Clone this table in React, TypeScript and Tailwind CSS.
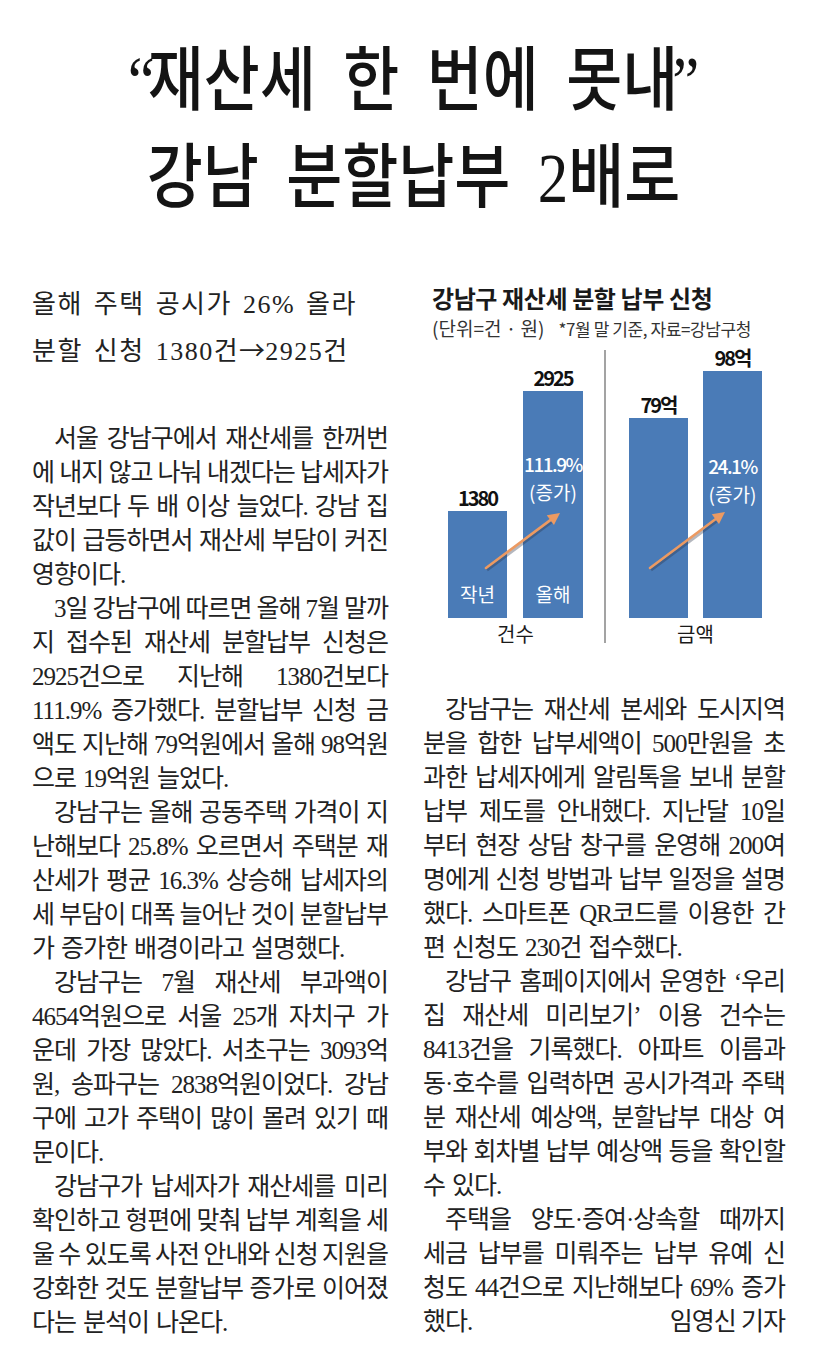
import React from 'react';

type Line = { t: string; ind?: boolean; last?: boolean; by?: string };

const leftCol: Line[] = [
  { t: '서울 강남구에서 재산세를 한꺼번', ind: true },
  { t: '에 내지 않고 나눠 내겠다는 납세자가' },
  { t: '작년보다 두 배 이상 늘었다. 강남 집' },
  { t: '값이 급등하면서 재산세 부담이 커진' },
  { t: '영향이다.', last: true },
  { t: '3일 강남구에 따르면 올해 7월 말까', ind: true },
  { t: '지 접수된 재산세 분할납부 신청은' },
  { t: '2925건으로 지난해 1380건보다' },
  { t: '111.9% 증가했다. 분할납부 신청 금' },
  { t: '액도 지난해 79억원에서 올해 98억원' },
  { t: '으로 19억원 늘었다.', last: true },
  { t: '강남구는 올해 공동주택 가격이 지', ind: true },
  { t: '난해보다 25.8% 오르면서 주택분 재' },
  { t: '산세가 평균 16.3% 상승해 납세자의' },
  { t: '세 부담이 대폭 늘어난 것이 분할납부' },
  { t: '가 증가한 배경이라고 설명했다.', last: true },
  { t: '강남구는 7월 재산세 부과액이', ind: true },
  { t: '4654억원으로 서울 25개 자치구 가' },
  { t: '운데 가장 많았다. 서초구는 3093억' },
  { t: '원, 송파구는 2838억원이었다. 강남' },
  { t: '구에 고가 주택이 많이 몰려 있기 때' },
  { t: '문이다.', last: true },
  { t: '강남구가 납세자가 재산세를 미리', ind: true },
  { t: '확인하고 형편에 맞춰 납부 계획을 세' },
  { t: '울 수 있도록 사전 안내와 신청 지원을' },
  { t: '강화한 것도 분할납부 증가로 이어졌' },
  { t: '다는 분석이 나온다.', last: true },
];

const rightCol: Line[] = [
  { t: '강남구는 재산세 본세와 도시지역', ind: true },
  { t: '분을 합한 납부세액이 500만원을 초' },
  { t: '과한 납세자에게 알림톡을 보내 분할' },
  { t: '납부 제도를 안내했다. 지난달 10일' },
  { t: '부터 현장 상담 창구를 운영해 200여' },
  { t: '명에게 신청 방법과 납부 일정을 설명' },
  { t: '했다. 스마트폰 QR코드를 이용한 간' },
  { t: '편 신청도 230건 접수했다.', last: true },
  { t: '강남구 홈페이지에서 운영한 ‘우리', ind: true },
  { t: '집 재산세 미리보기’ 이용 건수는' },
  { t: '8413건을 기록했다. 아파트 이름과' },
  { t: '동·호수를 입력하면 공시가격과 주택' },
  { t: '분 재산세 예상액, 분할납부 대상 여' },
  { t: '부와 회차별 납부 예상액 등을 확인할' },
  { t: '수 있다.', last: true },
  { t: '주택을 양도·증여·상속할 때까지', ind: true },
  { t: '세금 납부를 미뤄주는 납부 유예 신' },
  { t: '청도 44건으로 지난해보다 69% 증가' },
  { t: '했다.', by: '임영신 기자' },
];

// one printed line of the column, spread edge to edge like a newspaper
const TextLine = ({ line }: { line: Line }) => {
  if (line.by) {
    return (
      <div className="flex h-[34px] justify-between whitespace-nowrap leading-[34px]">
        <span>{line.t}</span>
        <span>{line.by}</span>
      </div>
    );
  }
  return (
    <div
      className={`flex h-[34px] whitespace-nowrap leading-[34px] ${
        line.last ? 'gap-x-[7px]' : 'justify-between gap-x-[4px]'
      } ${line.ind ? 'pl-[22px]' : ''}`}
    >
      {line.t.split(' ').map((w, i) => (
        <span key={i}>{w}</span>
      ))}
    </div>
  );
};

const Arrow = ({ x1, y1, x2, y2 }: { x1: number; y1: number; x2: number; y2: number }) => {
  const len = Math.hypot(x2 - x1, y2 - y1);
  const ux = (x2 - x1) / len;
  const uy = (y2 - y1) / len;
  const bx = x2 - ux * 12;
  const by = y2 - uy * 12;
  const nx = -uy;
  const ny = ux;
  const head = `${x2},${y2} ${bx + nx * 6},${by + ny * 6} ${bx - nx * 6},${by - ny * 6}`;
  return (
    <g>
      <line x1={x1 + 1} y1={y1 + 2} x2={bx + 1} y2={by + 2} stroke="rgba(40,50,70,0.35)" strokeWidth={3} />
      <line x1={x1} y1={y1} x2={bx} y2={by} stroke="#ec9a62" strokeWidth={2.6} strokeLinecap="round" />
      <polygon points={head} fill="#ec9a62" />
    </g>
  );
};

const Bar = ({
  value,
  width,
  height,
  pct,
  pctTop,
  label,
}: {
  value: string;
  width: number;
  height: number;
  pct?: string;
  pctTop?: number;
  label?: string;
}) => (
  <div className="flex flex-col items-center">
    <div className="mb-[3px] text-[20px] font-bold leading-[20px] tracking-[-2px] text-[#111]">{value}</div>
    <div className="flex flex-col items-center bg-[#4a7bb7] text-white" style={{ width, height }}>
      {pct && (
        <div className="text-center text-[19px] leading-[28px]" style={{ paddingTop: pctTop }}>
          <span className="font-medium tracking-[-1.5px]">{pct}</span>
          <br />
          (증가)
        </div>
      )}
      {label && <div className="mt-auto pb-[13px] text-[19px] leading-[22px]">{label}</div>}
    </div>
  </div>
);

const Chart = () => (
  <div className="font-['Noto_Sans_CJK_KR',sans-serif] text-[#1a1a1a]">
    <div className="pl-[9px] text-[24px] font-bold leading-[28px] tracking-[-0.4px]">강남구 재산세 분할 납부 신청</div>
    <div className="mt-[4px] flex items-baseline pl-[9px] leading-[24px] text-[#333]">
      <span className="text-[19px]">(단위=건 · 원)</span>
      <span className="ml-[14px] text-[17px] tracking-[-0.4px]">*7월 말 기준, 자료=강남구청</span>
    </div>
    <div className="relative mt-[4px] flex h-[305px]">
      <div className="ml-[25px] flex flex-col">
        <div className="flex flex-1 items-end gap-[16px]">
          <Bar value="1380" width={59} height={107} label="작년" />
          <Bar value="2925" width={60} height={227} pct="111.9%" pctTop={59} label="올해" />
        </div>
        <div className="h-[32px] pt-[4px] text-center text-[20px] leading-[24px]">건수</div>
      </div>
      <div className="mb-[7px] ml-[21px] mt-[5px] w-[2px] bg-[#a3a3a3]" />
      <div className="ml-[23px] flex flex-col">
        <div className="flex flex-1 items-end gap-[15px]">
          <Bar value="79억" width={59} height={200} />
          <Bar value="98억" width={59} height={247} pct="24.1%" pctTop={81} />
        </div>
        <div className="h-[32px] pt-[4px] text-center text-[20px] leading-[24px]">금액</div>
      </div>
      <svg className="pointer-events-none absolute inset-0" width="362" height="305" viewBox="0 0 362 305">
        <Arrow x1={63} y1={223} x2={137} y2={168} />
        <Arrow x1={227} y1={223} x2={302} y2={167} />
      </svg>
    </div>
  </div>
);

export default function App() {
  return (
    <div className="min-h-[1364px] w-[827px] bg-white font-['Liberation_Serif','Noto_Sans_CJK_KR',serif] text-[#222]">
      <header className="pt-[33px] text-center text-[#141414]">
        <div className="scale-x-[0.87] whitespace-nowrap text-[70px] font-medium leading-[97px] [word-spacing:14px]">
          <span className="tracking-[-8px]">“</span>재산세 한 번에 못<span className="tracking-[-7px]">내</span>”
        </div>
        <div className="scale-x-[0.87] whitespace-nowrap text-[70px] font-medium leading-[97px] [word-spacing:14px]">
          강남 분할납부 2배로
        </div>
      </header>

      <div className="mt-[56px] flex">
        <div className="ml-[32px] w-[356px]">
          <div className="text-[26px] leading-[44px] tracking-[1.5px] [word-spacing:3px]">
            <div>올해 주택 공시가 26% 올라</div>
            <div>
              분할 신청 1380건<span className="font-['Noto_Sans_CJK_KR',sans-serif] tracking-normal">→</span>2925건
            </div>
          </div>
          <div className="mt-[48px] text-[25px] tracking-[-1px]">
            {leftCol.map((l, i) => (
              <TextLine key={i} line={l} />
            ))}
          </div>
        </div>

        <div className="ml-[35px] w-[362px] pt-[1px]">
          <Chart />
          <div className="mt-[43px] text-[25px] tracking-[-1px]">
            {rightCol.map((l, i) => (
              <TextLine key={i} line={l} />
            ))}
          </div>
        </div>
      </div>
    </div>
  );
}
